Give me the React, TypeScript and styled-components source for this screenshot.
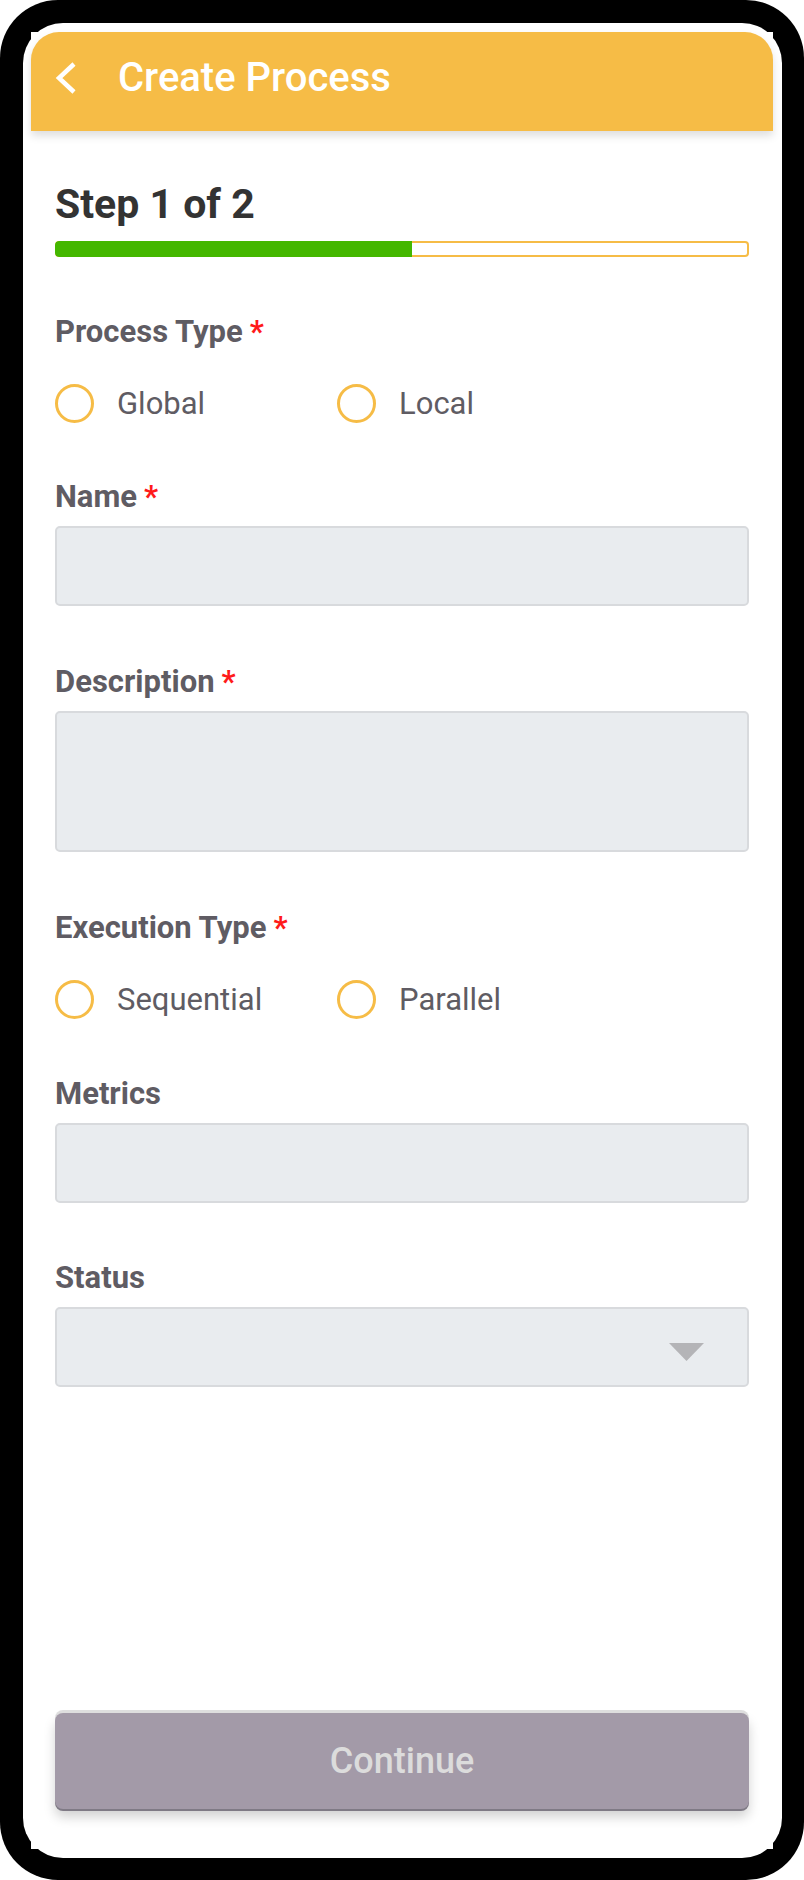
import React from "react";
import styled, { createGlobalStyle } from "styled-components";

const GlobalStyle = createGlobalStyle`
  html, body {
    margin: 0;
    padding: 0;
    background: #ffffff;
  }
  body {
    font-family: Roboto, "Noto Sans", "Liberation Sans", sans-serif;
  }
  * {
    box-sizing: border-box;
  }
`;

const Frame = styled.div`
  width: 804px;
  height: 1880px;
  background: #000000;
  border-radius: 58px;
  padding: 23px 22px 22px 23px;
  display: flex;
`;

const Bezel = styled.div`
  flex: 1;
  background: #ffffff;
  border-radius: 40px;
  padding: 9px 9px 9px 8px;
  display: flex;
`;

const Screen = styled.div`
  flex: 1;
  display: flex;
  flex-direction: column;
  background: #ffffff;
`;

const Header = styled.header`
  height: 99px;
  flex-shrink: 0;
  background: #f6bc46;
  border-radius: 28px 28px 0 0;
  display: flex;
  align-items: center;
  padding: 0 0 7px 24px;
  box-shadow: 0 5px 9px rgba(0, 0, 0, 0.13);
  position: relative;
  z-index: 1;
`;

const BackButton = styled.button`
  border: 0;
  padding: 0;
  background: transparent;
  display: flex;
  width: 22px;
  height: 32px;
`;

const Title = styled.h1`
  margin: 0 0 0 41px;
  font-size: 40px;
  line-height: 1;
  font-weight: 500;
  color: #ffffff;
`;

const Body = styled.main`
  flex: 1;
  display: flex;
  flex-direction: column;
  padding: 53px 24px 0;
`;

const StepTitle = styled.h2`
  margin: 0;
  font-size: 41px;
  line-height: 1;
  font-weight: 700;
  color: #333333;
`;

const Track = styled.div`
  margin-top: 16px;
  height: 16px;
  border-radius: 4px;
  background: #ffffff;
  box-shadow: inset 0 0 0 2px #f6bc46;
  display: flex;
  overflow: hidden;
`;

const Fill = styled.div`
  height: 100%;
  background: #44b700;
  border-radius: 4px 0 0 4px;
`;

const Field = styled.div<{ $gap: number }>`
  display: flex;
  flex-direction: column;
  margin-top: ${(p) => p.$gap}px;
`;

const Label = styled.label`
  font-size: 31px;
  line-height: 1;
  font-weight: 700;
  color: #5f5c63;
`;

const Required = styled.span`
  color: #ff1a1a;
  margin-left: 7px;
`;

const RadioGroup = styled.div<{ $gap: number }>`
  display: flex;
  margin-top: ${(p) => p.$gap}px;
`;

const RadioOption = styled.div`
  width: 282px;
  display: flex;
  align-items: center;
`;

const RadioCircle = styled.span`
  width: 39px;
  height: 39px;
  border-radius: 50%;
  border: 3.5px solid #f6bc46;
  flex-shrink: 0;
`;

const RadioText = styled.span`
  margin-left: 23px;
  font-size: 31px;
  line-height: 1;
  color: #5f5c63;
`;

const Input = styled.div<{ $height: number }>`
  margin-top: 14px;
  height: ${(p) => p.$height}px;
  background: #e9ecef;
  border: 2px solid #d8dadd;
  border-radius: 5px;
`;

const Select = styled(Input)`
  display: flex;
  align-items: center;
  justify-content: flex-end;
  padding: 10px 43px 0 0;
`;

const Footer = styled.footer`
  padding: 0 24px 40px;
`;

const ContinueButton = styled.button`
  width: 100%;
  height: 96px;
  border: 0;
  border-radius: 8px;
  background: #a39aa8;
  color: #dcdcdc;
  font-family: inherit;
  font-size: 36px;
  font-weight: 500;
  box-shadow: 0 -3px 0 #dedede, 0 2px 0 #7f7a85, 0 8px 12px rgba(0, 0, 0, 0.18);
`;

const Radio = ({ label }: { label: string }) => (
  <RadioOption>
    <RadioCircle />
    <RadioText>{label}</RadioText>
  </RadioOption>
);

const FieldLabel = ({ text, required }: { text: string; required?: boolean }) => (
  <Label>
    {text}
    {required && <Required>*</Required>}
  </Label>
);

const App = () => {
  const progress = 51.4;
  return (
    <>
      <GlobalStyle />
      <Frame>
        <Bezel>
          <Screen>
            <Header>
              <BackButton aria-label="Back">
                <svg width="22" height="32" viewBox="0 0 22 32">
                  <polyline
                    points="19,2 4,16 19,30"
                    fill="none"
                    stroke="#ffffff"
                    strokeWidth="4.5"
                  />
                </svg>
              </BackButton>
              <Title>Create Process</Title>
            </Header>
            <Body>
              <StepTitle>Step 1 of 2</StepTitle>
              <Track>
                <Fill style={{ width: `${progress}%` }} />
              </Track>

              <Field $gap={59}>
                <FieldLabel text="Process Type" required />
                <RadioGroup $gap={37}>
                  <Radio label="Global" />
                  <Radio label="Local" />
                </RadioGroup>
              </Field>

              <Field $gap={58}>
                <FieldLabel text="Name" required />
                <Input $height={80} />
              </Field>

              <Field $gap={60}>
                <FieldLabel text="Description" required />
                <Input $height={141} />
              </Field>

              <Field $gap={60}>
                <FieldLabel text="Execution Type" required />
                <RadioGroup $gap={37}>
                  <Radio label="Sequential" />
                  <Radio label="Parallel" />
                </RadioGroup>
              </Field>

              <Field $gap={59}>
                <FieldLabel text="Metrics" />
                <Input $height={80} />
              </Field>

              <Field $gap={59}>
                <FieldLabel text="Status" />
                <Select $height={80}>
                  <svg width="35" height="18" viewBox="0 0 35 18">
                    <polygon points="0,0 35,0 17.5,18" fill="#b4b4b7" />
                  </svg>
                </Select>
              </Field>
            </Body>
            <Footer>
              <ContinueButton>Continue</ContinueButton>
            </Footer>
          </Screen>
        </Bezel>
      </Frame>
    </>
  );
};

export default App;
